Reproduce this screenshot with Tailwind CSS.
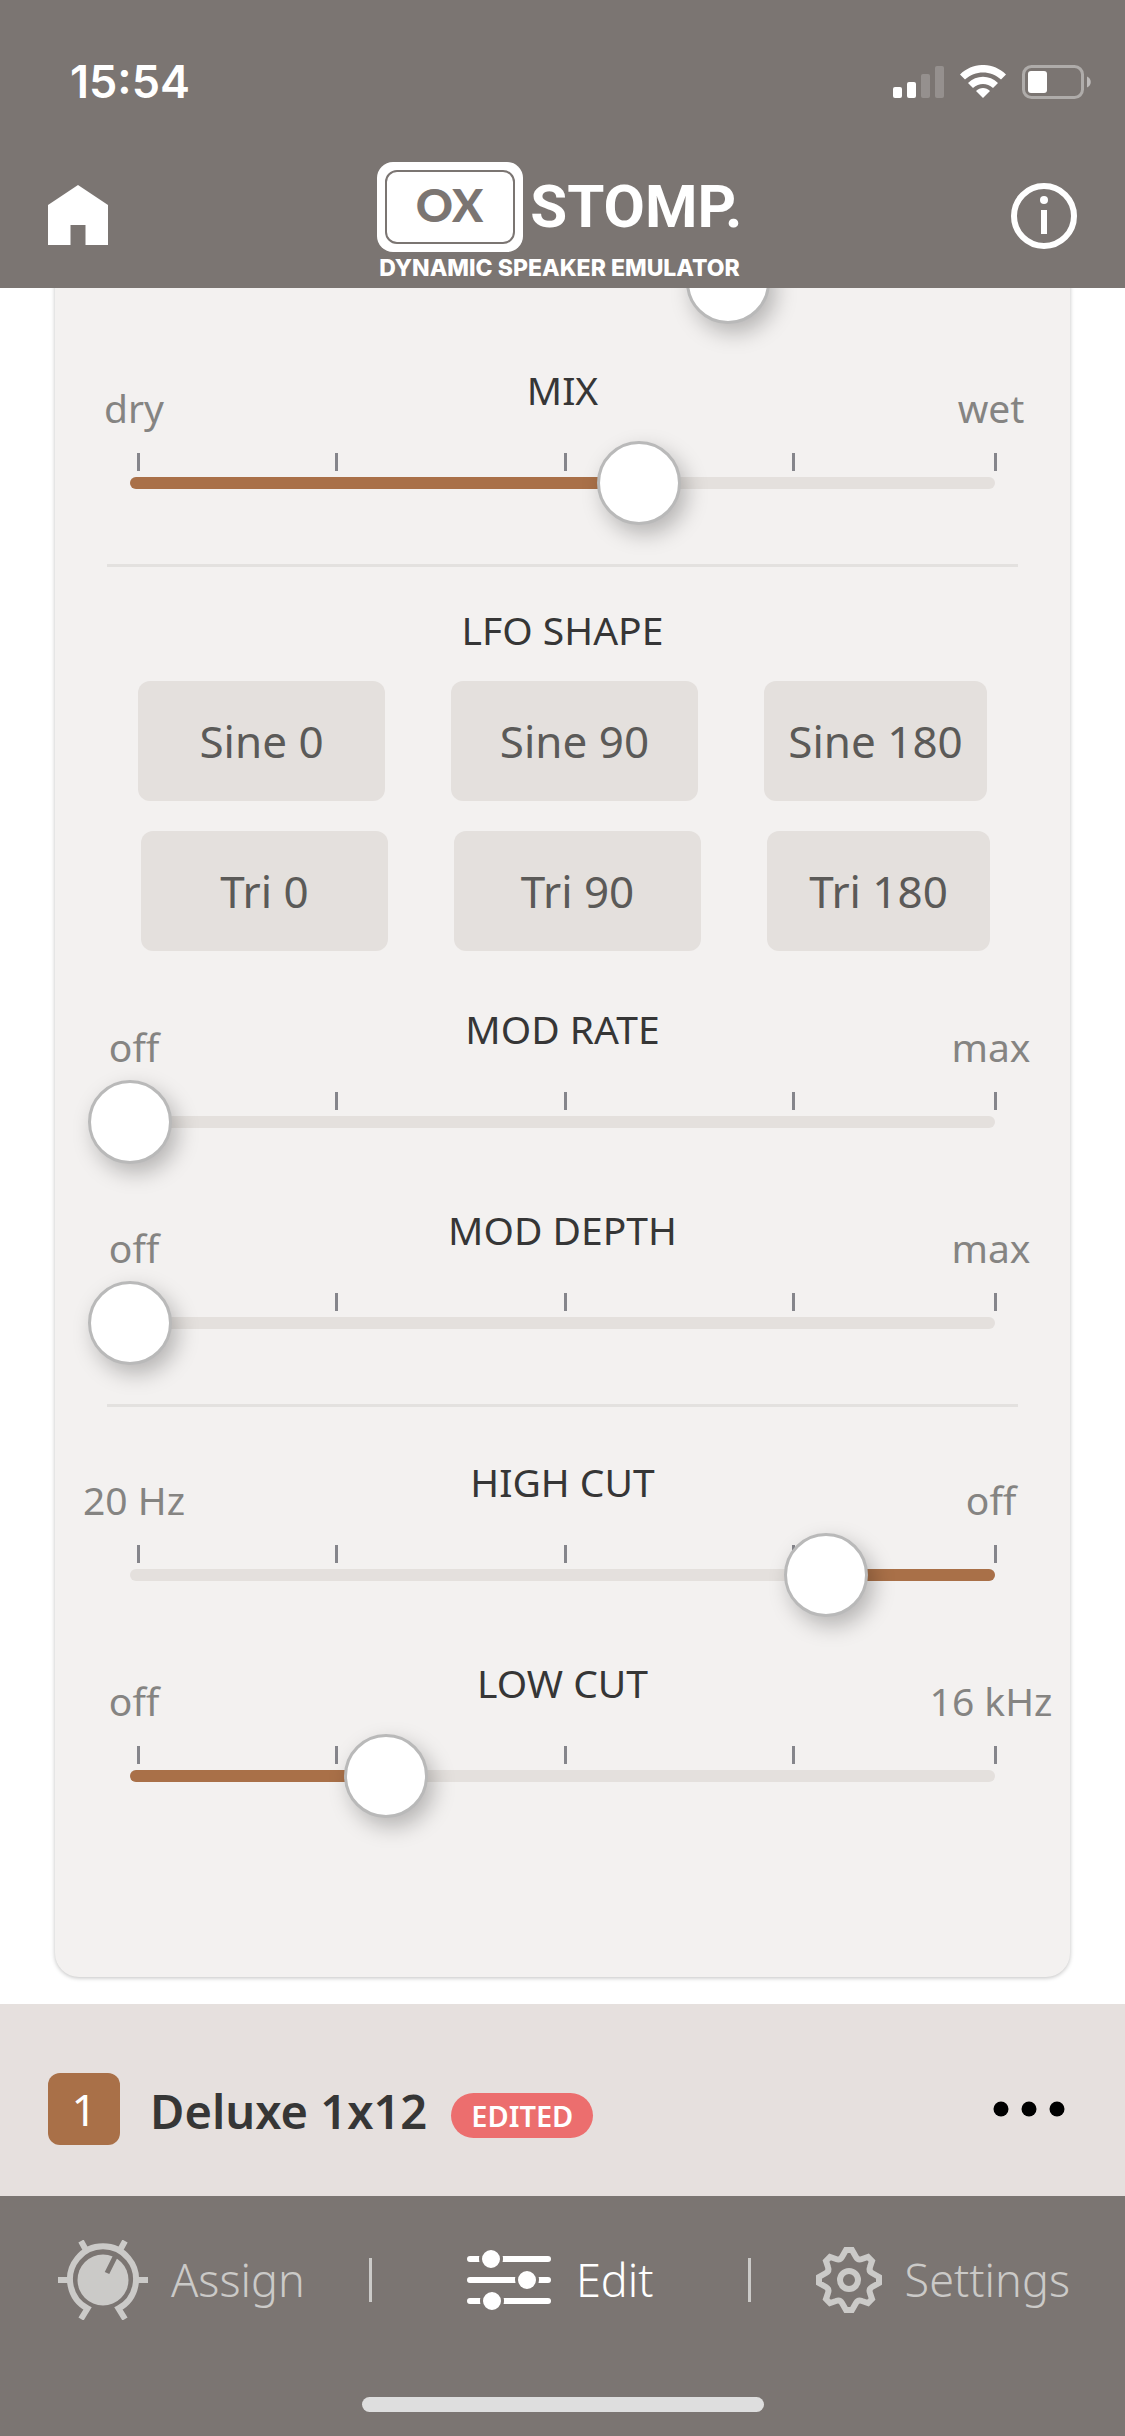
<!DOCTYPE html>
<html lang="en">

<head>
  <meta charset="UTF-8">
  <meta name="viewport" content="width=device-width, initial-scale=1.0">
  <title>OX Stomp - Edit</title>
  <script src="https://cdn.jsdelivr.net/npm/@tailwindcss/browser@4"></script>
</head>

<body class="h-screen flex flex-col bg-white font-['Noto_Sans','Open_Sans',sans-serif] text-[#363636]">

  <!-- Header -->
  <header class="shrink-0 h-[288px] bg-[#7b7572] text-white">
    <div class="flex justify-between items-center pl-[70px] pr-[33px] pt-[54px] h-[110px]">
      <span class="font-['Inter',sans-serif] font-semibold text-[45px] leading-[56px]">15:54</span>
      <div class="flex items-center gap-4">
        <svg class="w-[51px] h-[34px]" viewBox="0 0 51 34" fill="currentColor">
          <rect x="0" y="22" width="9" height="11" rx="2" />
          <rect x="14" y="17" width="9" height="16" rx="2" />
          <rect x="28" y="9" width="9" height="24" rx="2" opacity=".2" />
          <rect x="42" y="1" width="9" height="32" rx="2" opacity=".2" />
        </svg>
        <svg class="w-[46px] h-[34px]" viewBox="0 0 46 34" fill="currentColor">
          <path d="M0 9.500C13-3.200 33-3.200 46 9.500L41 14.500C31 5 15 5 5 14.500Z" />
          <path d="M8 18C16.500 9.500 29.500 9.500 38 18L33 23C27 17.500 19 17.500 13 23Z" />
          <path d="M16 26C20 22 26 22 30 26L23 33Z" />
        </svg>
        <svg class="w-[70px] h-[34px]" viewBox="0 0 70 34" fill="none">
          <rect x="1.500" y="1.500" width="59" height="31" rx="8" stroke="#fff" stroke-opacity=".4" stroke-width="3" />
          <rect x="6" y="6" width="19" height="22" rx="3" fill="#fff" />
          <path d="M65 11.500C70 13.500 70 20.500 65 22.500Z" fill="#fff" fill-opacity=".5" />
        </svg>
      </div>
    </div>

    <div class="flex justify-between items-start px-12 pt-[52px]">
      <a href="#" class="mt-[23px]" aria-label="Home">
        <svg class="w-[60px] h-[60px]" viewBox="0 0 60 60" fill="currentColor">
          <path d="M30 0L60 20V60H37.500V40H22.500V60H0V20Z" />
        </svg>
      </a>
      <div class="w-[366px]">
        <div class="flex justify-between items-center">
          <div class="shrink-0 w-[146px] h-[90px] rounded-2xl bg-white p-2">
            <div class="h-full rounded-xl border-2 border-[#7b7572] flex justify-center items-center text-[#7b7572] font-['Lato',sans-serif] font-black text-[46px] leading-none pb-1">OX</div>
          </div>
          <span class="font-['Roboto',sans-serif] font-bold text-[60px] leading-[90px]">STOMP.</span>
        </div>
        <p class="font-['Inter',sans-serif] font-extrabold text-[23px] leading-[32px] whitespace-nowrap text-center">DYNAMIC SPEAKER EMULATOR</p>
      </div>
      <button class="mt-[21px]" aria-label="Info">
        <svg class="w-[66px] h-[66px]" viewBox="0 0 66 66" fill="none">
          <circle cx="33" cy="33" r="30" stroke="currentColor" stroke-width="6" />
          <circle cx="33" cy="17" r="4" fill="currentColor" />
          <rect x="30" y="27" width="6" height="24" fill="currentColor" />
        </svg>
      </button>
    </div>
  </header>

  <!-- Controls: column-reverse makes the list open scrolled to its end -->
  <main class="flex-1 min-h-0 flex flex-col-reverse overflow-y-auto overflow-x-hidden [scrollbar-width:none] px-[55px]">
    <div class="shrink-0 h-[27px]"></div>
    <div class="shrink-0 bg-[#f3f1f0] rounded-b-3xl shadow-[0_1px_4px_rgba(0,0,0,0.25)] pb-[159px]">

      <div class="grid items-center px-[33px]">
        <div class="col-start-1 row-start-1 mx-[42px] h-3 rounded-full bg-[#e4e0dd] overflow-hidden">
          <div class="h-full bg-[#a97048]" style="width: 69%"></div>
        </div>
        <input type="range" min="0" max="1000" value="691" aria-label="Level" class="col-start-1 row-start-1 relative w-full h-[84px] appearance-none bg-transparent [&::-webkit-slider-thumb]:appearance-none [&::-webkit-slider-thumb]:size-[84px] [&::-webkit-slider-thumb]:rounded-full [&::-webkit-slider-thumb]:bg-white [&::-webkit-slider-thumb]:border-3 [&::-webkit-slider-thumb]:border-[#b9b9b9] [&::-webkit-slider-thumb]:shadow-[6px_9px_21px_rgba(0,0,0,0.25)]">
      </div>

      <!-- Mix -->
      <div class="flex items-start h-[117px] pt-9 text-[39px] leading-[60px] whitespace-nowrap">
        <span class="w-[158px] mt-[18px] text-center text-[#858482]">dry</span>
        <label for="mix" class="flex-1 text-center">MIX</label>
        <span class="w-[158px] mt-[18px] text-center text-[#858482]">wet</span>
      </div>
      <div class="grid items-center px-[33px]">
        <div class="col-start-1 row-start-1 self-start mt-3 ml-[49px] mr-10 h-[18px] grid grid-cols-[198fr_229fr_228fr_202fr_3px]">
          <i class="w-[3px] bg-[#85858b]"></i><i class="w-[3px] bg-[#85858b]"></i><i class="w-[3px] bg-[#85858b]"></i><i class="w-[3px] bg-[#85858b]"></i><i class="w-[3px] bg-[#85858b]"></i>
        </div>
        <div class="col-start-1 row-start-1 mx-[42px] h-3 rounded-full bg-[#e4e0dd] overflow-hidden">
          <div class="h-full bg-[#a97048]" style="width: 59%"></div>
        </div>
        <input type="range" id="mix" min="0" max="1000" value="588" class="col-start-1 row-start-1 relative w-full h-[84px] appearance-none bg-transparent [&::-webkit-slider-thumb]:appearance-none [&::-webkit-slider-thumb]:size-[84px] [&::-webkit-slider-thumb]:rounded-full [&::-webkit-slider-thumb]:bg-white [&::-webkit-slider-thumb]:border-3 [&::-webkit-slider-thumb]:border-[#b9b9b9] [&::-webkit-slider-thumb]:shadow-[6px_9px_21px_rgba(0,0,0,0.25)]">
      </div>

      <hr class="mt-[39px] mx-[52px] border-0 h-[3px] bg-[#e3e1df]">

      <!-- LFO shape -->
      <h2 class="mt-[33px] text-center text-[39px] leading-[60px]">LFO SHAPE</h2>
      <div class="mt-[21px] px-[83px] grid grid-cols-[247fr_247fr_223fr] gap-x-[66px] text-[44px] text-[#5b5a58] whitespace-nowrap">
        <button class="h-[120px] rounded-xl bg-[#e4e0dd]">Sine 0</button>
        <button class="h-[120px] rounded-xl bg-[#e4e0dd]">Sine 90</button>
        <button class="h-[120px] rounded-xl bg-[#e4e0dd]">Sine 180</button>
      </div>
      <div class="mt-[30px] pl-[86px] pr-20 grid grid-cols-[247fr_247fr_223fr] gap-x-[66px] text-[44px] text-[#5b5a58] whitespace-nowrap">
        <button class="h-[120px] rounded-xl bg-[#e4e0dd]">Tri 0</button>
        <button class="h-[120px] rounded-xl bg-[#e4e0dd]">Tri 90</button>
        <button class="h-[120px] rounded-xl bg-[#e4e0dd]">Tri 180</button>
      </div>

      <!-- Mod rate -->
      <div class="mt-3 flex items-start h-[117px] pt-9 text-[39px] leading-[60px] whitespace-nowrap">
        <span class="w-[158px] mt-[18px] text-center text-[#858482]">off</span>
        <label for="modRate" class="flex-1 text-center">MOD RATE</label>
        <span class="w-[158px] mt-[18px] text-center text-[#858482]">max</span>
      </div>
      <div class="grid items-center px-[33px]">
        <div class="col-start-1 row-start-1 self-start mt-3 ml-[49px] mr-10 h-[18px] grid grid-cols-[198fr_229fr_228fr_202fr_3px]">
          <i class="w-[3px] bg-[#85858b]"></i><i class="w-[3px] bg-[#85858b]"></i><i class="w-[3px] bg-[#85858b]"></i><i class="w-[3px] bg-[#85858b]"></i><i class="w-[3px] bg-[#85858b]"></i>
        </div>
        <div class="col-start-1 row-start-1 mx-[42px] h-3 rounded-full bg-[#e4e0dd]"></div>
        <input type="range" id="modRate" min="0" max="1000" value="0" class="col-start-1 row-start-1 relative w-full h-[84px] appearance-none bg-transparent [&::-webkit-slider-thumb]:appearance-none [&::-webkit-slider-thumb]:size-[84px] [&::-webkit-slider-thumb]:rounded-full [&::-webkit-slider-thumb]:bg-white [&::-webkit-slider-thumb]:border-3 [&::-webkit-slider-thumb]:border-[#b9b9b9] [&::-webkit-slider-thumb]:shadow-[6px_9px_21px_rgba(0,0,0,0.25)]">
      </div>

      <!-- Mod depth -->
      <div class="flex items-start h-[117px] pt-9 text-[39px] leading-[60px] whitespace-nowrap">
        <span class="w-[158px] mt-[18px] text-center text-[#858482]">off</span>
        <label for="modDepth" class="flex-1 text-center">MOD DEPTH</label>
        <span class="w-[158px] mt-[18px] text-center text-[#858482]">max</span>
      </div>
      <div class="grid items-center px-[33px]">
        <div class="col-start-1 row-start-1 self-start mt-3 ml-[49px] mr-10 h-[18px] grid grid-cols-[198fr_229fr_228fr_202fr_3px]">
          <i class="w-[3px] bg-[#85858b]"></i><i class="w-[3px] bg-[#85858b]"></i><i class="w-[3px] bg-[#85858b]"></i><i class="w-[3px] bg-[#85858b]"></i><i class="w-[3px] bg-[#85858b]"></i>
        </div>
        <div class="col-start-1 row-start-1 mx-[42px] h-3 rounded-full bg-[#e4e0dd]"></div>
        <input type="range" id="modDepth" min="0" max="1000" value="0" class="col-start-1 row-start-1 relative w-full h-[84px] appearance-none bg-transparent [&::-webkit-slider-thumb]:appearance-none [&::-webkit-slider-thumb]:size-[84px] [&::-webkit-slider-thumb]:rounded-full [&::-webkit-slider-thumb]:bg-white [&::-webkit-slider-thumb]:border-3 [&::-webkit-slider-thumb]:border-[#b9b9b9] [&::-webkit-slider-thumb]:shadow-[6px_9px_21px_rgba(0,0,0,0.25)]">
      </div>

      <hr class="mt-[39px] mx-[52px] border-0 h-[3px] bg-[#e3e1df]">

      <!-- High cut, filled from the right -->
      <div class="mt-[9px] flex items-start h-[117px] pt-9 text-[39px] leading-[60px] whitespace-nowrap">
        <span class="w-[158px] mt-[18px] text-center text-[#858482]">20 Hz</span>
        <label for="highCut" class="flex-1 text-center">HIGH CUT</label>
        <span class="w-[158px] mt-[18px] text-center text-[#858482]">off</span>
      </div>
      <div class="grid items-center px-[33px]">
        <div class="col-start-1 row-start-1 self-start mt-3 ml-[49px] mr-10 h-[18px] grid grid-cols-[198fr_229fr_228fr_202fr_3px]">
          <i class="w-[3px] bg-[#85858b]"></i><i class="w-[3px] bg-[#85858b]"></i><i class="w-[3px] bg-[#85858b]"></i><i class="w-[3px] bg-[#85858b]"></i><i class="w-[3px] bg-[#85858b]"></i>
        </div>
        <div class="col-start-1 row-start-1 mx-[42px] h-3 rounded-full bg-[#e4e0dd] overflow-hidden">
          <div class="h-full ml-auto bg-[#a97048]" style="width: 20%"></div>
        </div>
        <input type="range" id="highCut" min="0" max="1000" value="805" class="col-start-1 row-start-1 relative w-full h-[84px] appearance-none bg-transparent [&::-webkit-slider-thumb]:appearance-none [&::-webkit-slider-thumb]:size-[84px] [&::-webkit-slider-thumb]:rounded-full [&::-webkit-slider-thumb]:bg-white [&::-webkit-slider-thumb]:border-3 [&::-webkit-slider-thumb]:border-[#b9b9b9] [&::-webkit-slider-thumb]:shadow-[6px_9px_21px_rgba(0,0,0,0.25)]">
      </div>

      <!-- Low cut -->
      <div class="flex items-start h-[117px] pt-9 text-[39px] leading-[60px] whitespace-nowrap">
        <span class="w-[158px] mt-[18px] text-center text-[#858482]">off</span>
        <label for="lowCut" class="flex-1 text-center">LOW CUT</label>
        <span class="w-[158px] mt-[18px] text-center text-[#858482]">16 kHz</span>
      </div>
      <div class="grid items-center px-[33px]">
        <div class="col-start-1 row-start-1 self-start mt-3 ml-[49px] mr-10 h-[18px] grid grid-cols-[198fr_229fr_228fr_202fr_3px]">
          <i class="w-[3px] bg-[#85858b]"></i><i class="w-[3px] bg-[#85858b]"></i><i class="w-[3px] bg-[#85858b]"></i><i class="w-[3px] bg-[#85858b]"></i><i class="w-[3px] bg-[#85858b]"></i>
        </div>
        <div class="col-start-1 row-start-1 mx-[42px] h-3 rounded-full bg-[#e4e0dd] overflow-hidden">
          <div class="h-full bg-[#a97048]" style="width: 30%"></div>
        </div>
        <input type="range" id="lowCut" min="0" max="1000" value="296" class="col-start-1 row-start-1 relative w-full h-[84px] appearance-none bg-transparent [&::-webkit-slider-thumb]:appearance-none [&::-webkit-slider-thumb]:size-[84px] [&::-webkit-slider-thumb]:rounded-full [&::-webkit-slider-thumb]:bg-white [&::-webkit-slider-thumb]:border-3 [&::-webkit-slider-thumb]:border-[#b9b9b9] [&::-webkit-slider-thumb]:shadow-[6px_9px_21px_rgba(0,0,0,0.25)]">
      </div>
    </div>
  </main>

  <!-- Current preset -->
  <section class="shrink-0 h-[192px] px-12 pt-[18px] flex items-center bg-[#e6e0de]">
    <span class="size-[72px] rounded-xl bg-[#a97048] text-white text-[44px] flex justify-center items-center">1</span>
    <h1 class="ml-[30px] mt-1 text-[47px] leading-[72px] font-semibold whitespace-nowrap">Deluxe 1x12</h1>
    <span class="ml-6 mt-3 h-[45px] px-5 rounded-full bg-[#ec6e6e] text-white text-[29px] leading-[45px] font-semibold">EDITED</span>
    <button class="ml-auto mr-3" aria-label="More">
      <svg class="w-[72px] h-4" viewBox="0 0 72 16">
        <circle cx="8" cy="8" r="7.500" /><circle cx="36" cy="8" r="7.500" /><circle cx="64" cy="8" r="7.500" />
      </svg>
    </button>
  </section>

  <!-- Tabs -->
  <footer class="shrink-0 h-[240px] bg-[#7b7572] text-[#cbcac8]">
    <nav class="h-[168px] pl-[58px] pr-[55px] flex justify-between items-center text-[45px] font-light">
      <a href="#" class="flex items-center gap-[23px]">
        <svg class="w-[90px] h-20" viewBox="0 0 90 80" fill="none" stroke="currentColor" stroke-width="6">
          <path d="M23 79L29.500 68.500A33 33 0 1 1 60.500 68.500L67 79M23 1L29 12M67 1L61 12M0 40H12M78 40H90" />
          <circle cx="45" cy="40" r="25.500" fill="currentColor" stroke="none" />
          <path d="M58 15L49 33" stroke="#7b7572" stroke-width="5" />
        </svg>
        Assign
      </a>
      <div class="w-[3px] h-11 bg-[#cbcac8]"></div>
      <a href="#" class="px-[30px] flex items-center gap-[25px] text-white">
        <svg class="w-[84px] h-[60px]" viewBox="0 0 84 60" fill="currentColor" stroke="#7b7572" stroke-width="3">
          <path d="M3 9H81M3 30H81M3 51H81" stroke="currentColor" stroke-width="6" stroke-linecap="round" />
          <circle cx="24" cy="9" r="10.500" /><circle cx="60" cy="30" r="10.500" /><circle cx="25" cy="51" r="10.500" />
        </svg>
        Edit
      </a>
      <div class="w-[3px] h-11 bg-[#cbcac8]"></div>
      <a href="#" class="flex items-center gap-[23px]">
        <svg class="w-[66px] h-[66px]" viewBox="0 0 66 66" fill="none" stroke="currentColor" stroke-width="6">
          <path id="teeth" d="M30 3H36L40 10Q42 13.500 46 12L52 10L56 14L54 20Q52.500 24 56 26L63 30V36" />
          <use href="#teeth" transform="rotate(90 33 33)" />
          <use href="#teeth" transform="rotate(180 33 33)" />
          <use href="#teeth" transform="rotate(270 33 33)" />
          <circle cx="33" cy="33" r="9" />
        </svg>
        Settings
      </a>
    </nav>
    <div class="mx-auto mt-[33px] w-[402px] h-[15px] rounded-full bg-[#dedede]"></div>
  </footer>
</body>

</html>
